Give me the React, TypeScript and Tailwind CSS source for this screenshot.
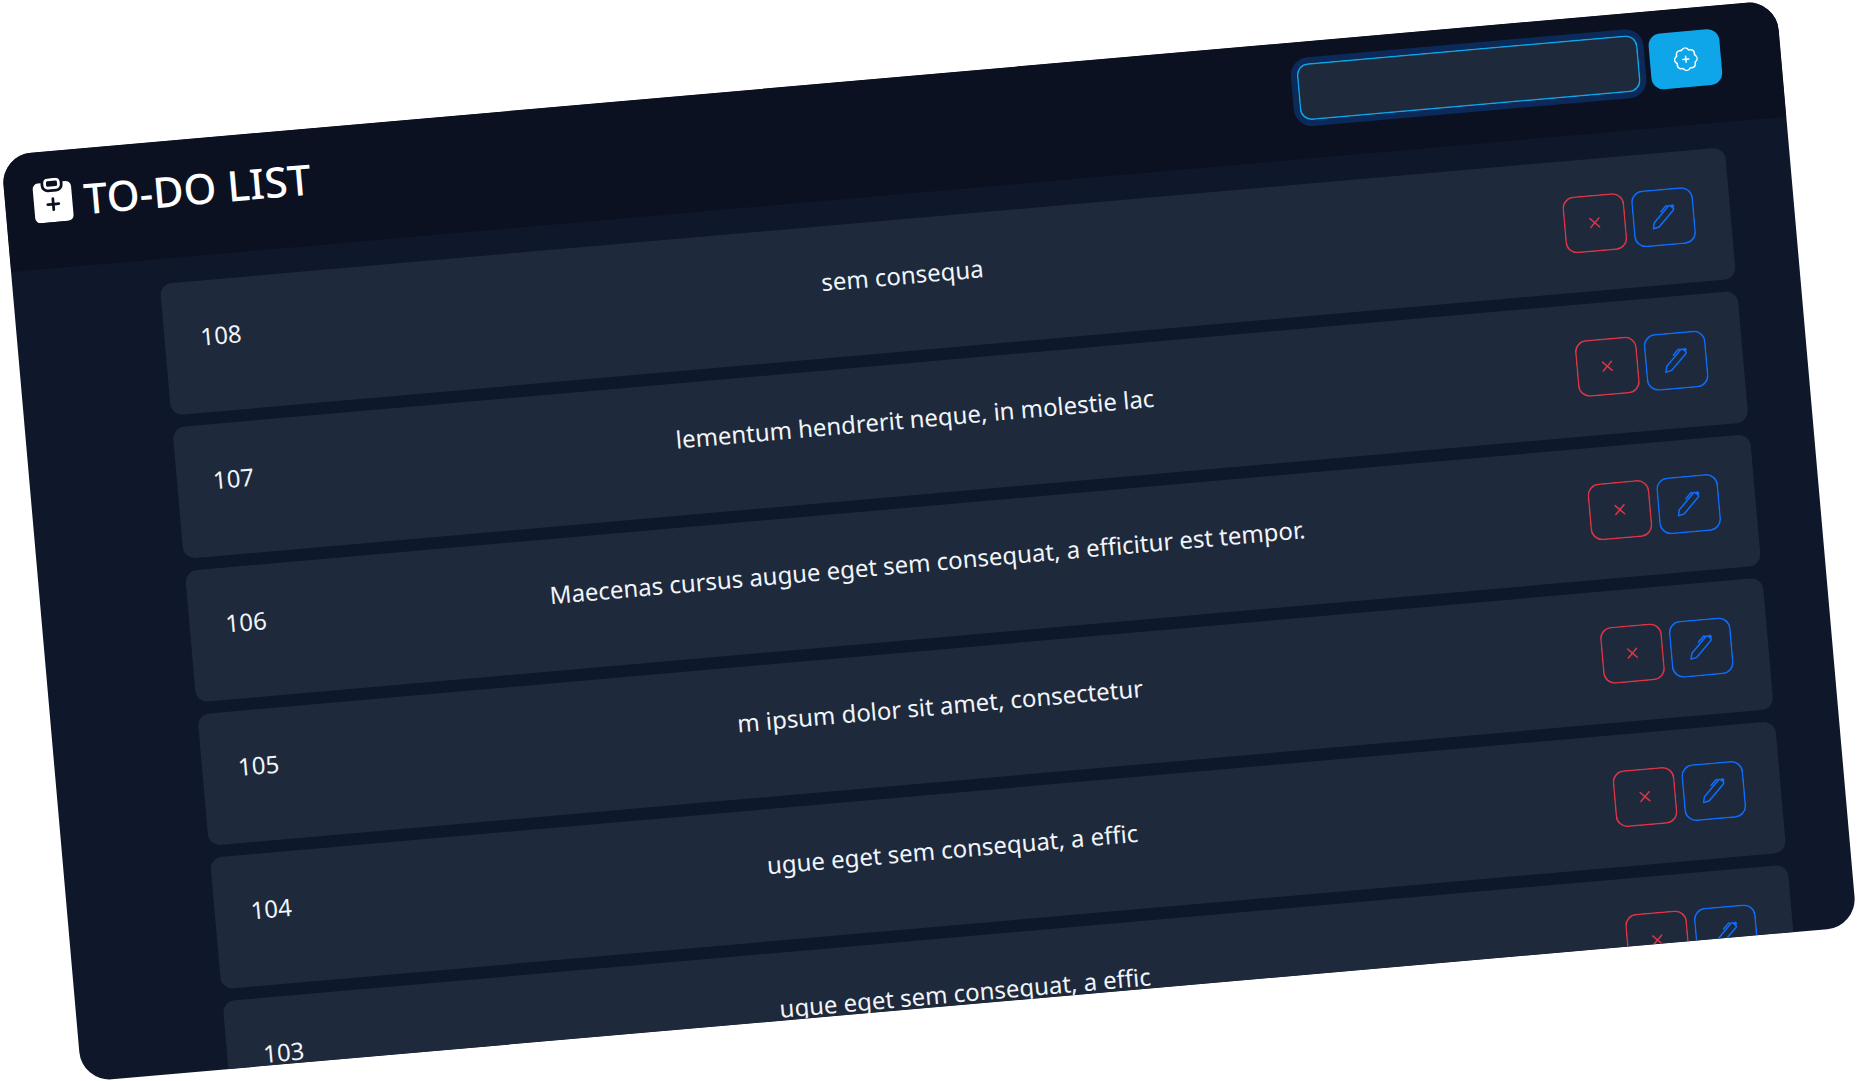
import React from 'react';
import { BsClipboardPlusFill, BsPatchPlus, BsPen, BsX } from 'react-icons/bs';

const todos = [
  { id: 108, text: 'sem consequa' },
  { id: 107, text: 'lementum hendrerit neque, in molestie lac' },
  { id: 106, text: 'Maecenas cursus augue eget sem consequat, a efficitur est tempor.' },
  { id: 105, text: 'm ipsum dolor sit amet, consectetur' },
  { id: 104, text: 'ugue eget sem consequat, a effic' },
  { id: 103, text: 'ugue eget sem consequat, a effic' },
];

const App: React.FC = () => {
  return (
    <div className="flex h-screen w-full items-center justify-center overflow-hidden bg-white font-['Noto_Sans',sans-serif]">
      <div className="flex h-[930px] w-[1782px] shrink-0 -rotate-5 flex-col overflow-hidden rounded-[30px] bg-[#0f172a]">
        {/* header */}
        <div className="flex h-[117px] shrink-0 items-start justify-between bg-[#0b1120] pr-[60px] pl-[26px]">
          <div className="mt-[20px] flex items-center gap-[9px] text-white">
            <BsClipboardPlusFill size={44} className="mb-[2px]" />
            <h1 className="text-[42px] leading-[60px] font-medium">TO-DO LIST</h1>
          </div>
          <div className="mt-[22px] flex items-center gap-[11px]">
            <input
              className="h-[57px] w-[342px] rounded-xl bg-[#1e293b] shadow-[inset_0_0_0_1.5px_#0ea5e9,0_0_0_6px_#0b2a5a] outline-none"
              readOnly
            />
            <button className="flex h-[56px] w-[71px] items-center justify-center rounded-xl bg-[#0ea5e9] text-white">
              <BsPatchPlus size={24} />
            </button>
          </div>
        </div>

        {/* list */}
        <div className="flex flex-col gap-[12px] overflow-hidden pt-[25px] pr-[64px] pl-[147px]">
          {todos.map((todo) => (
            <div
              key={todo.id}
              className="flex h-[132px] shrink-0 items-center justify-between rounded-xl bg-[#1e293b] px-[36px]"
            >
              <span className="mb-[20px] text-2xl text-slate-100">{todo.id}</span>
              <span className="mb-[20px] text-2xl text-slate-100">{todo.text}</span>
              <div className="mb-[4px] flex gap-[7px]">
                <button className="flex h-[57px] w-[62px] items-center justify-center rounded-xl text-[#dc3545] ring-[1.5px] ring-[#dc3545] ring-inset">
                  <BsX size={24} />
                </button>
                <button className="flex h-[57px] w-[62px] items-center justify-center rounded-xl text-[#0d6efd] ring-[1.5px] ring-[#0d6efd] ring-inset">
                  <BsPen size={24} />
                </button>
              </div>
            </div>
          ))}
        </div>
      </div>
    </div>
  );
};

export default App;
